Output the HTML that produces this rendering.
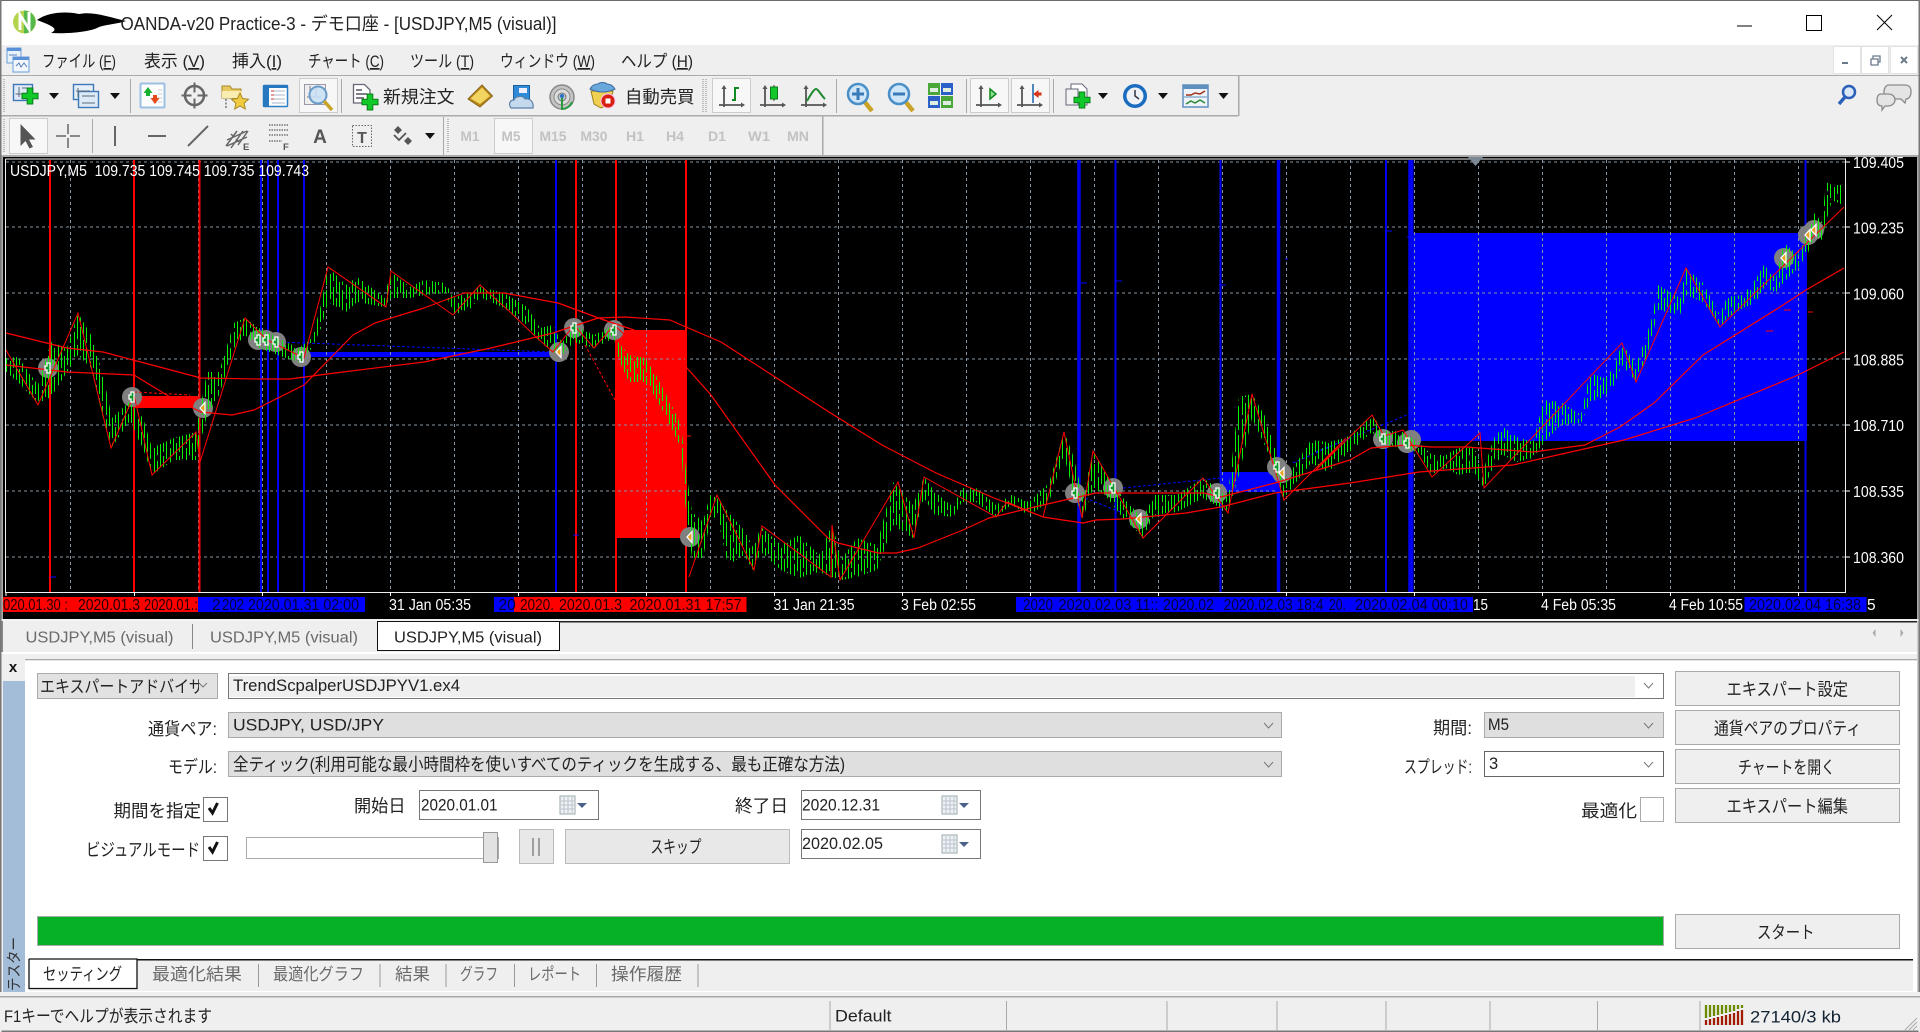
<!DOCTYPE html>
<html lang="ja"><head><meta charset="utf-8"><title>OANDA-v20 Practice-3</title>
<style>
html,body{margin:0;padding:0;width:1920px;height:1032px;overflow:hidden;background:#efefef}
svg{display:block;position:absolute;left:0;top:0}
text{font-family:"Liberation Sans","Noto Sans CJK JP",sans-serif;white-space:pre}
.d{fill:#222}.g{fill:#6a6a6a}.w{fill:#fff}.c{font-size:15.5px}.k{fill:#200}.n{fill:#003}.m{font-size:14px;font-weight:bold;fill:#c2c2c2;text-anchor:middle}
.f{font-size:16px}
</style></head><body>
<svg width="1920" height="1032" viewBox="0 0 1920 1032" xmlns="http://www.w3.org/2000/svg">
<defs>
<pattern id="bars" width="16" height="29" patternUnits="userSpaceOnUse">
<g fill="#06f006" shape-rendering="crispEdges">
<rect x="0" y="0" width="1" height="3"/><rect x="0" y="8" width="1" height="21"/>
<rect x="3" y="0" width="1" height="17"/><rect x="3" y="21" width="1" height="8"/>
<rect x="6" y="0" width="1" height="24"/>
<rect x="10" y="0" width="1" height="9"/><rect x="10" y="13" width="1" height="16"/>
<rect x="13" y="0" width="1" height="20"/><rect x="13" y="26" width="1" height="3"/>
</g></pattern>
<clipPath id="cmb"><rect x="38" y="674" width="161" height="24"/></clipPath>
<clipPath id="ch"><rect x="3" y="157" width="1914" height="462"/></clipPath>
<g id="plus"><path d="M-2.800-8h5.600v5.200h5.200v5.600h-5.200v5.200h-5.600v-5.200h-5.200v-5.600h5.200z" fill="#12c92a" stroke="#0a7d18" stroke-width="1"/></g>
<g id="ax"><path d="M-8-10V10M-13 8H11" stroke="#555" stroke-width="1.800" fill="none"/><path d="M-8-12l-2.500 4h5zM13 8l-4-2.500v5z" fill="#555"/></g>
<g id="mag"><path d="M6 7l8 10" stroke="#c9a227" stroke-width="4.500"/><circle r="10" cy="0" fill="#cfe5f8" stroke="#4a90c8" stroke-width="2.500"/></g>
<g id="cal"><rect width="15" height="18" fill="#eef1f5" stroke="#9aa" stroke-width="1"/><path d="M4 1v16M8 1v16M12 1v16M1 5h13M1 9h13M1 13h13" stroke="#bcc4cc" stroke-width="1"/><path d="M17 7h10l-5 5z" fill="#4a6288"/></g>
<g id="sig"><circle r="10" fill="#808080"/></g>
<g id="gb"><path d="M2-5h-3v3h-2v4h2v3h3z" fill="#0a9a2a" stroke="#fff" stroke-width="1.300"/></g>
<g id="gs"><path d="M-3 0l5-5.500v11z" fill="#e8a020" stroke="#fff" stroke-width="1.300"/></g>
</defs>

<!-- title bar -->
<rect width="1920" height="45" fill="#fff"/>
<rect width="1920" height="1" fill="#6b6b6b"/>
<circle cx="24.500" cy="22" r="11.500" fill="#b4d44e"/>
<path d="M24 10.500a11.500 11.500 0 0 1 0 23z" fill="#55b84a"/>
<path d="M20 30V15l9 14V12" fill="none" stroke="#fff" stroke-width="3"/>
<path d="M37 20c10-8 30-9 42-6 14-3 30 3 47 7-8 3-18 3-27 6-8 5-32 7-48 6 8-4 2-7-14-13z" fill="#000"/>
<text x="120.500" y="30" font-size="18" fill="#222" textLength="436" lengthAdjust="spacingAndGlyphs">OANDA-v20 Practice-3 - デモ口座 - [USDJPY,M5 (visual)]</text>
<path d="M1737 26h15" stroke="#000" stroke-width="1"/>
<rect x="1806.500" y="15.500" width="15" height="15" fill="none" stroke="#000"/>
<path d="M1877 15l15 15M1892 15l-15 15" stroke="#000"/>

<!-- menu -->
<rect y="45" width="1920" height="30" fill="#efefef"/>
<g>
<rect x="7" y="48" width="14" height="15" fill="#e8f0fa" stroke="#6a9cd8"/><rect x="7" y="48" width="14" height="3" fill="#5a90d8"/>
<rect x="13" y="57" width="16" height="15" fill="#f2f7fd" stroke="#6a9cd8"/><rect x="13" y="57" width="16" height="3" fill="#5a90d8"/>
<path d="M16 66l3-3 2 4 3-4 3 4" stroke="#5a80b8" fill="none"/><path d="M9 55h8" stroke="#5a80b8"/>
</g>
<g class="d" font-size="17">
<text x="42" y="67" textLength="74" lengthAdjust="spacingAndGlyphs">ファイル (<tspan text-decoration="underline">F</tspan>)</text>
<text x="144" y="67" textLength="61" lengthAdjust="spacingAndGlyphs">表示 (<tspan text-decoration="underline">V</tspan>)</text>
<text x="232" y="67" textLength="50" lengthAdjust="spacingAndGlyphs">挿入(<tspan text-decoration="underline">I</tspan>)</text>
<text x="308" y="67" textLength="76" lengthAdjust="spacingAndGlyphs">チャート (<tspan text-decoration="underline">C</tspan>)</text>
<text x="410" y="67" textLength="64" lengthAdjust="spacingAndGlyphs">ツール (<tspan text-decoration="underline">T</tspan>)</text>
<text x="500" y="67" textLength="95" lengthAdjust="spacingAndGlyphs">ウィンドウ (<tspan text-decoration="underline">W</tspan>)</text>
<text x="621" y="67" textLength="72" lengthAdjust="spacingAndGlyphs">ヘルプ (<tspan text-decoration="underline">H</tspan>)</text>
</g>
<g fill="#fff" stroke="#e2e2e2"><rect x="1833.500" y="46.500" width="27" height="27"/><rect x="1861.500" y="46.500" width="27" height="27"/><rect x="1890.500" y="46.500" width="27" height="27"/></g>
<path d="M1842 63h6" stroke="#6a7a8a" stroke-width="2"/>
<path d="M1871 59h7v6h-7zM1873 59v-3h7v6h-2" fill="none" stroke="#6a7a8a" stroke-width="1.300"/>
<path d="M1901 57l6 6M1907 57l-6 6" stroke="#6a7a8a" stroke-width="2"/>

<!-- toolbars -->
<rect y="75" width="1920" height="1" fill="#aaa"/>
<rect y="115" width="1238" height="1.500" fill="#aaa"/>
<rect x="1238" y="76" width="1.500" height="40" fill="#aaa"/>
<rect x="822" y="116" width="1.500" height="39" fill="#aaa"/>
<rect y="155" width="1920" height="2" fill="#aaa"/>
<g fill="#aaa"><rect x="130" y="79" width="1" height="34"/><rect x="341" y="79" width="1" height="34"/><rect x="836" y="79" width="1" height="34"/><rect x="966" y="79" width="1" height="34"/><rect x="1053" y="79" width="1" height="34"/><rect x="92" y="119" width="1" height="34"/><rect x="443" y="117" width="1" height="38"/></g>
<path d="M4 79v34M4 119v34M448 119v34M703 79v34M706 79v34" stroke="#aaa" stroke-dasharray="1 1" stroke-width="1.500"/>
<!-- pressed boxes -->
<g fill="#f7f7f7" stroke="#ccc"><rect x="299.500" y="78.500" width="38" height="34"/><rect x="712.500" y="78.500" width="38" height="34"/><rect x="970.500" y="78.500" width="38" height="34"/><rect x="1011.500" y="78.500" width="38" height="34"/><rect x="9.500" y="118.500" width="38" height="35"/><rect x="494.500" y="118.500" width="38" height="35"/></g>

<!-- T1 icons -->
<g><rect x="13.500" y="84.500" width="19" height="16" fill="#dfeaf6" stroke="#3f78b8" stroke-width="1.400"/><path d="M19 87v10M15.500 94H27M22 88h7" stroke="#5a6a7a" fill="none"/><use href="#plus" x="30" y="96"/></g>
<path d="M49 93h10l-5 6z" fill="#111"/>
<g><rect x="73.500" y="84.500" width="20" height="15" fill="#e6eff8" stroke="#3f78b8" stroke-width="1.400"/><rect x="78.500" y="91.500" width="20" height="16" fill="#dce9f6" stroke="#3f78b8" stroke-width="1.400"/><path d="M78 88v9M76 91h14M82 96h13M82 103h13" stroke="#5a6a7a"/></g>
<path d="M110 93h10l-5 6z" fill="#111"/>
<g><rect x="140.500" y="83.500" width="24" height="24" rx="1" fill="#fdfdfd" stroke="#9cc0e4" stroke-width="2"/><path d="M158 90h4M158 94h4M158 98h4M158 102h4" stroke="#ccc"/><path d="M148 87l4.500 6h-2.500v3h-4v-3h-2.500z" fill="#18b030"/><path d="M155 104l-4.500-6h2.500v-3h4v3h2.500z" fill="#e84818"/></g>
<g transform="translate(194.500 95.500)"><circle r="9.500" fill="none" stroke="#666" stroke-width="2.500"/><path d="M0-13V-3M0 3V13M-13 0H-3M3 0H13" stroke="#666" stroke-width="2"/></g>
<g><path d="M222 86h8l2 3h9v9h-19z" fill="#e8c860" stroke="#a88a28"/><rect x="222" y="91" width="20" height="7" fill="#f8ecb0"/><path d="M226 99v9" stroke="#777" stroke-width="1.500" stroke-dasharray="2 1.500"/><path d="M240 93l2.500 5.500 6 .7-4.400 4 1.200 5.800-5.300-3-5.300 3 1.200-5.800-4.400-4 6-.7z" fill="#f2cc40" stroke="#a88a28"/></g>
<g><rect x="263.500" y="85.500" width="24" height="21" rx="1" fill="#fff" stroke="#2f7fc8" stroke-width="1.500"/><rect x="263" y="85" width="6" height="22" fill="#2878c0"/><rect x="263" y="85" width="25" height="3" fill="#2878c0"/><path d="M272 91h13M272 95h13M272 99h13M272 103h13" stroke="#a8b4c8"/><path d="M271 91h3M271 95h3M271 99h3" stroke="#c33"/></g>
<g><rect x="304.500" y="84.500" width="21" height="20" fill="#eee" stroke="#99a"/><path d="M310 86v14M307 97h14M316 88v8" stroke="#778"/><circle cx="318" cy="95" r="8.500" fill="#c8e0f4" fill-opacity=".85" stroke="#6a9cc8" stroke-width="2"/><path d="M324 101l8 9" stroke="#c9a227" stroke-width="3.500"/></g>
<g><path d="M353.500 84.500h11l5.500 5.500v13h-16.500z" fill="#fff" stroke="#667" stroke-width="1.300"/><path d="M356 90h6M356 94h11M356 98h8" stroke="#556" stroke-width="1.500"/><use href="#plus" x="370" y="102"/></g>
<text x="383" y="103" class="d" font-size="17.500" textLength="71.500" lengthAdjust="spacingAndGlyphs">新規注文</text>
<g><path d="M468 99l14-14 10.500 11-12.500 11z" fill="#b8841c" stroke="#8a6a18"/><path d="M470.500 98.500l11.500-11 8 8.500-10 8z" fill="#f2d460"/></g>
<g><path d="M513.500 85.500h16v15h-16z" fill="#2f8ad8" stroke="#1c5f9f"/><rect x="519" y="88" width="8" height="5" fill="#eef"/><path d="M511 108c-3-4-1-8 3-8 1-4 9-5 11-1 5-1 9 3 8 9z" fill="#c4d9ee" stroke="#5a80a8" stroke-width="1.200"/></g>
<g transform="translate(562 97)"><circle r="12" fill="#c4c4c4" stroke="#8a8a8a" stroke-width="1.500"/><circle r="8" fill="#dcdcdc" stroke="#8a8a8a"/><circle r="4" fill="#b8c8d0" stroke="#777"/><path d="M0 1v11c5 0 9-4 10-7" stroke="#2a9a40" stroke-width="2" fill="none"/><circle cy="-1" r="2" fill="#2a70c0"/></g>
<g><path d="M591 91h22l-3 13-9 4-7-4z" fill="#f0d050" stroke="#a08020"/><path d="M590 89c2-4 5-5 8-5 2-2 7-2 9 0 3 0 6 2 8 5-8 4-17 4-25 0z" fill="#6aa8dc" stroke="#3a6a9f"/><circle cx="608" cy="101" r="7" fill="#d82010" stroke="#fbe" stroke-width="1"/><rect x="605.500" y="98.500" width="5" height="5" fill="#fff"/></g>
<text x="625" y="103" class="d" font-size="17.500" textLength="69.500" lengthAdjust="spacingAndGlyphs">自動売買</text>

<g transform="translate(732 97)"><use href="#ax"/><path d="M0 3H3V-9H7" stroke="#108a20" stroke-width="2" fill="none"/></g>
<g transform="translate(773 97)"><use href="#ax"/><path d="M1-12v16" stroke="#333"/><rect x="-2.500" y="-10" width="7" height="12" fill="#14c82c" stroke="#0a7a18"/></g>
<g transform="translate(814 97)"><use href="#ax"/><path d="M-7 4C-3-3 0-8 2-8S7-2 11 2" stroke="#208a30" stroke-width="2" fill="none"/></g>
<g transform="translate(858 94)"><use href="#mag"/><path d="M-6 0H6M0-6V6" stroke="#3a7ab8" stroke-width="3"/></g>
<g transform="translate(899 94)"><use href="#mag"/><path d="M-6 0H6" stroke="#3a7ab8" stroke-width="3"/></g>
<g transform="translate(928 83)"><rect width="12" height="12" fill="#4aa83a"/><rect x="13" width="12" height="12" fill="#2a60c8"/><rect y="13" width="12" height="12" fill="#2a60c8"/><rect x="13" y="13" width="12" height="12" fill="#4aa83a"/><path d="M2 5h8v4H2zM15 5h8v4h-8zM2 18h8v4H2zM15 18h8v4h-8z" fill="#dfeee0"/></g>
<g transform="translate(989 97)"><use href="#ax"/><path d="M1-8l6 5-6 5z" fill="#8fe08f" stroke="#108a20" stroke-width="1.500"/></g>
<g transform="translate(1030 97)"><use href="#ax"/><path d="M3-13V6" stroke="#3a7ab8" stroke-width="1.800"/><path d="M4-3l4-3v2h3v2H8v2z" fill="#e03818" stroke="#d03010"/></g>
<g transform="translate(1065 83)"><path d="M6 1h11l5 5v16H6z" fill="#fff" stroke="#667"/><rect x="1" y="6" width="12" height="16" fill="#f2f2f2" stroke="#667"/><use href="#plus" x="17" y="17"/></g>
<path d="M1098 93h10l-5 6z" fill="#111"/>
<g transform="translate(1135 96)"><circle r="12" fill="#1a6cc0"/><circle r="8.500" fill="#eef2f6"/><path d="M0-6V0L4 3" stroke="#334" stroke-width="1.500" fill="none"/></g>
<path d="M1158 93h10l-5 6z" fill="#111"/>
<g transform="translate(1183 85)"><rect width="25" height="22" fill="#eef3f9" stroke="#5f8fbf" stroke-width="1.500"/><rect width="25" height="4" fill="#5f8fbf"/><path d="M3 10l5 0 4-2 5 1 5-3" stroke="#a03018" stroke-width="1.500" fill="none"/><path d="M1 12h23" stroke="#5f8fbf"/><path d="M3 19l5-3 4 2 5-3 5 3" stroke="#2a8a30" stroke-width="1.500" fill="none"/></g>
<path d="M1218.500 93h10l-5 6z" fill="#111"/>
<circle cx="1849" cy="92" r="6" fill="#dbe8f8" stroke="#2a60b8" stroke-width="2.500"/><path d="M1845 97l-6 7" stroke="#2a60b8" stroke-width="3.500"/>
<g fill="#e4e4e4" stroke="#8a8a8a" stroke-width="1.300"><path d="M1889 85h15c6 0 7 3 7 7s-2 7-5 7l-1 4-4-4h-11c-4 0-6-3-6-7s2-7 5-7z"/><path d="M1881 94h7c5 0 7 3 7 6s-3 6-7 6h-3l-3 4v-4c-4 0-5-3-5-6s1-6 4-6z"/></g>

<!-- T2 icons -->
<path d="M20.500 124v22l5-5 4 7.500 3.500-1.500-4-7.500h6.500z" fill="#555"/>
<path d="M68 124v10M68 138v10M56 136h10M70 136h10" stroke="#666" stroke-width="1.500"/>
<path d="M115 126v20M148 136h18M188 146l20-20" stroke="#666" stroke-width="2"/>
<g stroke="#666" stroke-width="1.500" fill="none"><path d="M226 146l11-15M231 148l12-17M238 145l10-14M227 140l20-9M227 146l20-9M231 134l3 3M236 139l3 3"/></g>
<text x="243" y="150" font-size="9.500" font-weight="bold" fill="#555">E</text>
<path d="M269 125h20M269 130h20M269 135h20M269 141h13" stroke="#777" stroke-dasharray="1.500 1" stroke-width="1.500"/>
<text x="283" y="150" font-size="9.500" font-weight="bold" fill="#555">F</text>
<text x="320" y="143" font-size="19" font-weight="bold" fill="#555" text-anchor="middle">A</text>
<rect x="352.500" y="125.500" width="19" height="21" fill="none" stroke="#666" stroke-dasharray="1.500 1.500"/>
<text x="362" y="143" font-size="16" font-weight="bold" fill="#555" text-anchor="middle">T</text>
<path d="M398 126l4 4-4 4-4-4zM408 137l4 4-4 4-4-4z" fill="#555"/><path d="M394 135l5 5 7-7" stroke="#555" stroke-width="1.800" fill="none"/>
<path d="M425 133h10l-5 6z" fill="#111"/>
<text class="m" x="470" y="141" textLength="19" lengthAdjust="spacingAndGlyphs">M1</text>
<text class="m" x="511" y="141" textLength="19" lengthAdjust="spacingAndGlyphs">M5</text>
<text class="m" x="553" y="141" textLength="27" lengthAdjust="spacingAndGlyphs">M15</text>
<text class="m" x="594" y="141" textLength="27" lengthAdjust="spacingAndGlyphs">M30</text>
<text class="m" x="635" y="141" textLength="18" lengthAdjust="spacingAndGlyphs">H1</text>
<text class="m" x="675" y="141" textLength="18" lengthAdjust="spacingAndGlyphs">H4</text>
<text class="m" x="717" y="141" textLength="18" lengthAdjust="spacingAndGlyphs">D1</text>
<text class="m" x="759" y="141" textLength="22" lengthAdjust="spacingAndGlyphs">W1</text>
<text class="m" x="798" y="141" textLength="22" lengthAdjust="spacingAndGlyphs">MN</text>

<!-- chart -->
<rect x="0" y="157" width="1920" height="463" fill="#a8a8a8"/>
<rect x="3" y="157" width="1914" height="462" fill="#000"/>
<g clip-path="url(#ch)">
<rect x="134" y="396" width="66" height="12" fill="#f00"/>
<rect x="615" y="330" width="72" height="208" fill="#f00"/>
<rect x="310" y="352" width="243" height="5" fill="#00f"/>
<rect x="1412" y="233" width="395" height="208" fill="#00f"/>
<rect x="1221" y="472" width="58" height="20" fill="#00f"/>
<path d="M6 162H1845M6 227H1845M6 293H1845M6 359H1845M6 425H1845M6 491H1845M6 557H1845M70.500 160V592M134.500 160V592M198.500 160V592M262.500 160V592M326.500 160V592M390.500 160V592M454.500 160V592M518.500 160V592M582.500 160V592M646.500 160V592M710.500 160V592M774.500 160V592M838.500 160V592M902.500 160V592M966.500 160V592M1030.500 160V592M1094.500 160V592M1158.500 160V592M1222.500 160V592M1286.500 160V592M1350.500 160V592M1414.500 160V592M1478.500 160V592M1542.500 160V592M1606.500 160V592M1670.500 160V592M1734.500 160V592M1798.500 160V592" stroke="#8494a4" stroke-width="1" stroke-dasharray="3 3" fill="none"/>
<path d="M50 160V592M134 160V592M199.500 160V592M576 160V592M616 160V592M686 160V592" stroke="#f00" stroke-width="2" fill="none"/>
<path d="M261 160V592M268 160V592M278 160V592M304 160V592M556 160V592M1115.500 160V592M1220.500 160V592M1386 160V592M1805.500 160V592" stroke="#0000f0" stroke-width="2" fill="none"/>
<path d="M1079 160V592M1278.500 160V592M1410 160V592" stroke="#0000f0" stroke-width="3.500" fill="none"/>
<path d="M1412.500 160V592" stroke="#0000f0" stroke-width="2"/>
<path d="M277 342L553 352M1085 498L1123 513M1123 488L1221 478M1293 463L1350 438M1316 452L1407 415" stroke="#00f" stroke-width="1" stroke-dasharray="3 2" fill="none"/>
<g><use href="#sig" x="48" y="368"/><use href="#sig" x="132" y="397"/><use href="#sig" x="203" y="408"/><use href="#sig" x="258" y="340"/><use href="#sig" x="266" y="340"/><use href="#sig" x="276" y="342"/><use href="#sig" x="301" y="357"/><use href="#sig" x="559" y="352"/><use href="#sig" x="574" y="328"/><use href="#sig" x="614" y="330"/><use href="#sig" x="690" y="537"/><use href="#sig" x="1075" y="493"/><use href="#sig" x="1113" y="488"/><use href="#sig" x="1139" y="519"/><use href="#sig" x="1217" y="493"/><use href="#sig" x="1277" y="467"/><use href="#sig" x="1282" y="473"/><use href="#sig" x="1383" y="439"/><use href="#sig" x="1407" y="443"/><use href="#sig" x="1411" y="440"/><use href="#sig" x="1784" y="258"/><use href="#sig" x="1808" y="235"/><use href="#sig" x="1814" y="230"/></g>
<polygon fill="url(#bars)" points="6,358 18,357 38,385 51,342 67,348 78,313 91,335 103,375 112,418 129,402 143,418 152,448 174,438 196,432 207,372 219,372 234,323 245,318 259,328 286,342 299,348 312,338 321,305 328,267 346,285 357,277 384,297 391,272 410,287 424,280 446,283 453,298 471,292 480,287 504,293 527,307 540,328 553,325 562,343 574,325 594,335 614,325 618,342 629,355 645,358 656,375 670,402 681,425 685,462 692,512 703,522 710,495 717,498 728,512 744,530 753,547 761,527 781,545 799,535 819,555 832,525 842,558 857,538 877,545 893,482 913,505 924,477 935,492 953,507 962,488 976,488 996,505 1011,495 1029,502 1049,483 1064,432 1072,452 1083,495 1093,452 1105,472 1123,498 1143,518 1154,495 1177,495 1203,478 1228,495 1239,397 1252,394 1266,418 1275,448 1284,482 1311,440 1328,442 1346,438 1372,415 1383,430 1403,432 1418,442 1432,455 1446,455 1458,448 1474,448 1484,468 1494,438 1503,427 1517,437 1533,442 1544,400 1561,402 1581,415 1590,373 1604,378 1614,368 1622,343 1636,365 1646,337 1652,318 1658,285 1680,298 1686,268 1703,283 1720,315 1727,297 1743,295 1755,280 1764,265 1776,278 1784,243 1798,255 1808,232 1814,213 1822,222 1826,182 1832,185 1843,185 1843,205 1832,200 1826,222 1822,240 1814,235 1808,253 1798,268 1784,282 1776,292 1764,288 1755,303 1743,308 1727,318 1720,327 1703,302 1686,295 1680,315 1658,310 1652,338 1646,358 1636,382 1622,365 1614,385 1604,397 1590,402 1581,423 1561,425 1544,442 1533,458 1517,462 1503,455 1494,465 1484,488 1474,472 1458,475 1446,468 1432,475 1418,452 1403,448 1383,445 1372,432 1346,455 1328,472 1311,463 1284,498 1275,472 1266,448 1252,418 1239,475 1228,512 1203,498 1177,512 1154,515 1143,537 1123,518 1105,495 1093,488 1083,518 1072,488 1064,455 1049,502 1029,515 1011,505 996,517 976,502 962,502 953,517 935,515 924,498 913,538 893,525 877,570 857,577 842,580 832,577 819,572 799,578 781,570 761,552 753,570 744,555 728,565 717,515 710,522 703,558 692,558 685,502 681,448 670,425 656,398 645,382 629,382 618,358 614,338 594,348 574,342 562,355 553,352 540,342 527,325 504,308 480,297 471,308 453,315 446,293 424,295 410,298 391,298 384,307 357,302 346,312 328,302 321,328 312,348 299,362 286,358 259,348 245,335 234,348 219,395 207,415 196,460 174,460 152,475 143,448 129,422 112,447 103,418 91,368 78,355 67,372 51,397 38,403 18,382 6,372"/>
<g fill="none" stroke="#f00" stroke-width="1.200" stroke-linejoin="round">
<polyline points="6,333 67,348 103,352 152,365 201,378 259,379 290,379 335,373 424,362 491,348 553,333 598,318 625,317 670,320 686,327 721,342 775,377 829,412 882,445 936,473 994,498 1043,517 1083,523 1096,520 1123,519 1186,513 1221,507 1275,493 1350,483 1419,472 1513,465 1624,440 1695,418 1798,375 1844,352"/>
<polyline points="6,365 67,372 134,375 170,397 201,412 232,415 254,410 304,385 353,335 375,323 424,308 464,293 504,293 558,303 604,320 634,330 687,368 711,395 775,485 828,538 838,543 878,553 896,553 918,548 963,530 989,518 1043,505 1065,500 1096,493 1159,493 1204,493 1221,497 1275,483 1350,460 1371,448 1407,445 1431,447 1466,447 1533,452 1585,445 1620,427 1654,403 1703,355 1780,307 1806,290 1844,268"/>
</g>
<polyline fill="none" stroke="#f00" stroke-width="1" points="6,350 38,405 78,313 111,448 134,395 152,475 196,432 200,462 245,318 267,340 304,358 328,267 386,307 391,271 453,315 480,285 510,312 536,337 553,352 574,325 594,348 614,325 636,345"/>
<polyline fill="none" stroke="#f00" stroke-width="1" points="689,577 717,495 754,570 762,526 831,577 832,525 840,580 898,482 914,538 924,477 996,517 1007,502 1043,517 1064,432 1082,518 1093,451 1143,538 1203,478 1228,513 1252,394 1284,500 1346,438 1316,470 1372,415 1384,436 1403,430 1432,477 1480,433 1484,488 1622,343 1636,382 1686,268 1720,327 1844,207"/>
<path d="M585 345L615 400M134 392L190 395" fill="none" stroke="#f00" stroke-width="1" stroke-dasharray="3 2"/>
<path d="M1766 331h7M1784 310h7M1808 312h5M686 436h5M574 535h5" stroke="#f00" fill="none"/>
<path d="M50 577h6M573 535h6M1079 283h8M1115 281h7M1219 285h7M1285 259h3M1386 231h6M1407 237h6" stroke="#00f" fill="none"/>
<g><use href="#gb" x="48" y="368"/><use href="#gb" x="132" y="397"/><use href="#gb" x="258" y="340"/><use href="#gb" x="266" y="340"/><use href="#gb" x="276" y="342"/><use href="#gb" x="301" y="357"/><use href="#gb" x="574" y="328"/><use href="#gb" x="614" y="330"/><use href="#gb" x="1075" y="493"/><use href="#gb" x="1113" y="488"/><use href="#gb" x="1217" y="493"/><use href="#gb" x="1277" y="467"/><use href="#gb" x="1383" y="439"/><use href="#gb" x="1407" y="443"/><use href="#gs" x="203" y="408"/><use href="#gs" x="559" y="352"/><use href="#gs" x="690" y="537"/><use href="#gs" x="1139" y="519"/><use href="#gs" x="1282" y="473"/><use href="#gs" x="1784" y="258"/><use href="#gs" x="1808" y="235"/><use href="#gs" x="1814" y="230"/></g>
<!-- axes -->
<path d="M5.500 159V592.500H1845.500V159H5.500" fill="none" stroke="#eee" stroke-width="1"/>
<path d="M1845 162h5M1845 227h5M1845 293h5M1845 359h5M1845 425h5M1845 491h5M1845 557h5M6 592v4M134.500 592v4M262.500 592v4M390.500 592v4M518.500 592v4M646.500 592v4M774.500 592v4M902.500 592v4M1030.500 592v4M1158.500 592v4M1286.500 592v4M1414.500 592v4M1542.500 592v4M1670.500 592v4M1798.500 592v4" stroke="#fff" fill="none"/>
<path d="M1468 157h15l-7.500 9z" fill="#7c8894"/>
<text class="w" x="10" y="176" font-size="15.500" textLength="299" lengthAdjust="spacingAndGlyphs">USDJPY,M5  109.735 109.745 109.735 109.743</text>
<g class="w c">
<text x="1853" y="168" textLength="51" lengthAdjust="spacingAndGlyphs">109.405</text>
<text x="1853" y="233.500" textLength="51" lengthAdjust="spacingAndGlyphs">109.235</text>
<text x="1853" y="299.500" textLength="51" lengthAdjust="spacingAndGlyphs">109.060</text>
<text x="1853" y="365.500" textLength="51" lengthAdjust="spacingAndGlyphs">108.885</text>
<text x="1853" y="431" textLength="51" lengthAdjust="spacingAndGlyphs">108.710</text>
<text x="1853" y="497" textLength="51" lengthAdjust="spacingAndGlyphs">108.535</text>
<text x="1853" y="563" textLength="51" lengthAdjust="spacingAndGlyphs">108.360</text>
</g>
<!-- time axis -->
<rect x="3" y="597" width="195" height="15" fill="#f00"/><rect x="198" y="597" width="167" height="15" fill="#00f"/>
<rect x="494" y="597" width="20" height="15" fill="#00f"/><rect x="514" y="597" width="232.500" height="15" fill="#f00"/>
<rect x="1016" y="597" width="457" height="15" fill="#00f"/><rect x="1744.500" y="597" width="122" height="15" fill="#00f"/>
<g class="c">
<text class="k" x="3" y="610" textLength="65" lengthAdjust="spacingAndGlyphs">020.01.30 :</text>
<text class="k" x="78" y="610" textLength="62" lengthAdjust="spacingAndGlyphs">2020.01.3</text>
<text class="k" x="144" y="610" textLength="54" lengthAdjust="spacingAndGlyphs">2020.01.:</text>
<text class="n" x="212" y="610">2</text>
<text class="n" x="222" y="610" textLength="22" lengthAdjust="spacingAndGlyphs">202</text>
<text class="n" x="248" y="610" textLength="111" lengthAdjust="spacingAndGlyphs">2020.01.31 02:00</text>
<text class="w" x="389" y="610" textLength="82" lengthAdjust="spacingAndGlyphs">31 Jan 05:35</text>
<text class="n" x="498.500" y="610">20</text>
<text class="k" x="520" y="610" textLength="34" lengthAdjust="spacingAndGlyphs">2020.</text>
<text class="k" x="559" y="610" textLength="63" lengthAdjust="spacingAndGlyphs">2020.01.3</text>
<text class="k" x="629.500" y="610" textLength="112" lengthAdjust="spacingAndGlyphs">2020.01.31 17:57</text>
<text class="w" x="773.500" y="610" textLength="81" lengthAdjust="spacingAndGlyphs">31 Jan 21:35</text>
<text class="w" x="901" y="610" textLength="75" lengthAdjust="spacingAndGlyphs">3 Feb 02:55</text>
<text class="n" x="1023" y="610" textLength="30" lengthAdjust="spacingAndGlyphs">2020</text>
<text class="n" x="1058.500" y="610" textLength="100" lengthAdjust="spacingAndGlyphs">2020.02.03 11::</text>
<text class="n" x="1163" y="610" textLength="51" lengthAdjust="spacingAndGlyphs">2020.02</text>
<text class="n" x="1223.500" y="610" textLength="100" lengthAdjust="spacingAndGlyphs">2020.02.03 18:4</text>
<text class="n" x="1329" y="610" textLength="17" lengthAdjust="spacingAndGlyphs">20.</text>
<text class="n" x="1355" y="610" textLength="113" lengthAdjust="spacingAndGlyphs">2020.02.04 00:10</text>
<text class="w" x="1473" y="610" textLength="15" lengthAdjust="spacingAndGlyphs">15</text>
<text class="w" x="1541" y="610" textLength="75" lengthAdjust="spacingAndGlyphs">4 Feb 05:35</text>
<text class="w" x="1669" y="610" textLength="74" lengthAdjust="spacingAndGlyphs">4 Feb 10:55</text>
<text class="n" x="1749" y="610" textLength="112" lengthAdjust="spacingAndGlyphs">2020.02.04 16:38</text>
<text class="w" x="1867" y="610">5</text>
</g>
</g>

<!-- upper tabs -->
<rect y="619" width="1920" height="2" fill="#f2f2f2"/>
<rect y="621" width="1920" height="31" fill="#efefef"/>
<rect x="560" y="621" width="1360" height="1.500" fill="#222"/>
<rect x="0" y="621" width="3" height="31" fill="#888"/>
<rect x="377.500" y="621.500" width="182" height="29" fill="#fff" stroke="#111"/>
<rect x="192" y="624" width="1" height="25" fill="#888"/>
<g class="f">
<text class="g" x="25.500" y="642.500" textLength="148" lengthAdjust="spacingAndGlyphs">USDJPY,M5 (visual)</text>
<text class="g" x="210" y="642.500" textLength="148" lengthAdjust="spacingAndGlyphs">USDJPY,M5 (visual)</text>
<text class="d" x="394" y="642.500" textLength="148" lengthAdjust="spacingAndGlyphs">USDJPY,M5 (visual)</text>
</g>
<path d="M1875.500 629v8l-3-4zM1900.500 629v8l3-4z" fill="#aaa"/>
<rect y="652" width="1920" height="2" fill="#fff"/>

<!-- tester panel -->
<rect x="25" y="659" width="1892" height="333" fill="#fff"/>
<rect x="25" y="659" width="1892" height="1.300" fill="#aaa"/>
<rect x="3" y="681" width="22" height="311" fill="#a3bcd8"/>
<text x="13" y="672" font-size="15" font-weight="bold" fill="#111" text-anchor="middle">x</text>
<text transform="translate(19 991) rotate(-90)" font-size="15" fill="#333" textLength="54" lengthAdjust="spacingAndGlyphs">テスター</text>
<rect x="1917" y="621" width="3" height="375" fill="#cfcfcf"/>
<rect x="1918.500" y="0" width="1.500" height="1032" fill="#777"/>
<rect x="0" y="0" width="1.500" height="1032" fill="#777"/>

<!-- combos -->
<rect x="37.500" y="673.500" width="180" height="25" fill="#e2e2e2" stroke="#aaa"/>
<text clip-path="url(#cmb)" class="d" x="40" y="692.500" font-size="17" textLength="164" lengthAdjust="spacingAndGlyphs">エキスパートアドバイザ</text>
<rect x="228.500" y="673.500" width="1435" height="25" fill="#fff" stroke="#777"/>
<rect x="229" y="676" width="1406" height="21" fill="#efefef"/>
<text class="d" x="233" y="691" font-size="16.500" textLength="227" lengthAdjust="spacingAndGlyphs">TrendScpalperUSDJPYV1.ex4</text>
<rect x="228.500" y="712.500" width="1053" height="25" fill="#dfdfdf" stroke="#aaa"/>
<text class="d" x="233" y="730.500" font-size="16.500" textLength="151" lengthAdjust="spacingAndGlyphs">USDJPY, USD/JPY</text>
<rect x="228.500" y="751.500" width="1053" height="25" fill="#dfdfdf" stroke="#aaa"/>
<text class="d" x="233" y="770.500" font-size="17.500" textLength="612" lengthAdjust="spacingAndGlyphs">全ティック(利用可能な最小時間枠を使いすべてのティックを生成する、最も正確な方法)</text>
<rect x="1484.500" y="712.500" width="179" height="25" fill="#dfdfdf" stroke="#aaa"/>
<text class="d" x="1488" y="730" font-size="16.500" textLength="21" lengthAdjust="spacingAndGlyphs">M5</text>
<rect x="1484.500" y="751.500" width="179" height="25" fill="#fff" stroke="#666"/>
<text class="d" x="1489" y="769" font-size="16.500">3</text>
<path d="M199 683l4 4 4-4M1644 683l4.500 5 4.500-5M1264 723l4.500 5 4.500-5M1264 762l4.500 5 4.500-5M1644 723l4.500 5 4.500-5M1644 762l4.500 5 4.500-5" fill="none" stroke="#777"/>
<!-- labels -->
<g class="d" font-size="17.500">
<text x="148" y="735" textLength="69" lengthAdjust="spacingAndGlyphs">通貨ペア:</text>
<text x="168" y="773" textLength="49" lengthAdjust="spacingAndGlyphs">モデル:</text>
<text x="113.500" y="817" textLength="87.500" lengthAdjust="spacingAndGlyphs">期間を指定</text>
<text x="86" y="856" textLength="114" lengthAdjust="spacingAndGlyphs">ビジュアルモード</text>
<text x="354" y="812" textLength="51.500" lengthAdjust="spacingAndGlyphs">開始日</text>
<text x="735" y="812" textLength="53" lengthAdjust="spacingAndGlyphs">終了日</text>
<text x="1433" y="734" textLength="39" lengthAdjust="spacingAndGlyphs">期間:</text>
<text x="1404" y="773" textLength="68" lengthAdjust="spacingAndGlyphs">スプレッド:</text>
<text x="1581" y="817" textLength="56" lengthAdjust="spacingAndGlyphs">最適化</text>
</g>
<!-- checkboxes -->
<g fill="#fff" stroke="#777"><rect x="203.500" y="797.500" width="24" height="24"/><rect x="203.500" y="836.500" width="24" height="24"/></g>
<rect x="1640.500" y="797.500" width="23" height="24" fill="#fff" stroke="#aaa"/>
<path d="M209 808l3.500 5 5-10M209 847l3.500 5 5-10" fill="none" stroke="#111" stroke-width="3"/>
<!-- date fields -->
<rect x="419.500" y="790.500" width="179" height="29" fill="#fff" stroke="#777"/>
<rect x="801.500" y="790.500" width="179" height="29" fill="#fff" stroke="#777"/>
<rect x="801.500" y="829.500" width="179" height="29" fill="#fff" stroke="#777"/>
<use href="#cal" x="560" y="796"/><use href="#cal" x="942" y="796"/><use href="#cal" x="942" y="835"/>
<g class="d" font-size="16.500">
<text x="421" y="810.500" textLength="76.500" lengthAdjust="spacingAndGlyphs">2020.01.01</text>
<text x="802" y="810.500" textLength="78" lengthAdjust="spacingAndGlyphs">2020.12.31</text>
<text x="802" y="849" textLength="81" lengthAdjust="spacingAndGlyphs">2020.02.05</text>
</g>
<!-- slider, pause, skip -->
<rect x="246.500" y="837.500" width="252" height="21" fill="#fff" stroke="#aaa"/>
<rect x="483.500" y="832.500" width="14" height="30" fill="#e2e2e2" stroke="#999"/>
<rect x="519.500" y="829.500" width="34" height="34" fill="#e8e8e8" stroke="#bbb"/>
<path d="M533 838v18M539 838v18" stroke="#555"/>
<rect x="565.500" y="829.500" width="224" height="34" fill="#e8e8e8" stroke="#bbb"/>
<text class="d" x="650.500" y="853" font-size="17.500" textLength="51" lengthAdjust="spacingAndGlyphs">スキップ</text>
<!-- right buttons -->
<g fill="#efefef" stroke="#aaa"><rect x="1675.500" y="671.500" width="224" height="34"/><rect x="1675.500" y="710.500" width="224" height="34"/><rect x="1675.500" y="749.500" width="224" height="34"/><rect x="1675.500" y="788.500" width="224" height="34"/><rect x="1675.500" y="914.500" width="224" height="34"/></g>
<g class="d" font-size="17.500">
<text x="1726.500" y="695.500" textLength="121.500" lengthAdjust="spacingAndGlyphs">エキスパート設定</text>
<text x="1714" y="734.500" textLength="147" lengthAdjust="spacingAndGlyphs">通貨ペアのプロパティ</text>
<text x="1738" y="773.500" textLength="97" lengthAdjust="spacingAndGlyphs">チャートを開く</text>
<text x="1726.500" y="812.500" textLength="121.500" lengthAdjust="spacingAndGlyphs">エキスパート編集</text>
<text x="1757" y="938.500" textLength="57.500" lengthAdjust="spacingAndGlyphs">スタート</text>
</g>
<!-- progress -->
<rect x="37.500" y="916.500" width="1626" height="29" fill="#06b126" stroke="#aaa"/>
<!-- bottom tabs -->
<rect x="29" y="960" width="1884" height="31" fill="#efefef"/>
<rect x="137" y="959" width="1776" height="1.500" fill="#111"/>
<rect x="29" y="958.500" width="108" height="30" fill="#fff"/>
<path d="M29 959H137V988.500H29V959" fill="none" stroke="#111" stroke-width="1.300"/>
<g fill="#999"><rect x="258" y="964" width="1" height="23"/><rect x="379.500" y="964" width="1" height="23"/><rect x="445.500" y="964" width="1" height="23"/><rect x="514" y="964" width="1" height="23"/><rect x="596" y="964" width="1" height="23"/><rect x="697.500" y="964" width="1" height="23"/></g>
<g font-size="17">
<text class="d" x="43" y="980" textLength="79" lengthAdjust="spacingAndGlyphs">セッティング</text>
<text class="g" x="152" y="980" textLength="90" lengthAdjust="spacingAndGlyphs">最適化結果</text>
<text class="g" x="273" y="980" textLength="91" lengthAdjust="spacingAndGlyphs">最適化グラフ</text>
<text class="g" x="395" y="980" textLength="35" lengthAdjust="spacingAndGlyphs">結果</text>
<text class="g" x="460" y="980" textLength="38" lengthAdjust="spacingAndGlyphs">グラフ</text>
<text class="g" x="528" y="980" textLength="53" lengthAdjust="spacingAndGlyphs">レポート</text>
<text class="g" x="611" y="980" textLength="71" lengthAdjust="spacingAndGlyphs">操作履歴</text>
</g>
<!-- status bar -->
<rect y="992" width="1920" height="40" fill="#efefef"/>
<rect y="996" width="1920" height="1.500" fill="#aaa"/>
<rect x="1.500" y="1030.500" width="1917" height="1.500" fill="#777"/>
<g fill="#aaa"><rect x="829.500" y="1001" width="1" height="29"/><rect x="1006" y="1001" width="1" height="29"/><rect x="1166.500" y="1001" width="1" height="29"/><rect x="1276.500" y="1001" width="1" height="29"/><rect x="1385.500" y="1001" width="1" height="29"/><rect x="1489.500" y="1001" width="1" height="29"/><rect x="1597" y="1001" width="1" height="29"/><rect x="1699.500" y="1001" width="1" height="29"/></g>
<text class="d" x="4" y="1022" font-size="17" textLength="208" lengthAdjust="spacingAndGlyphs">F1キーでヘルプが表示されます</text>
<text class="d" x="835" y="1021.500" font-size="16.500" textLength="56.500" lengthAdjust="spacingAndGlyphs">Default</text>
<path d="M1706 1005v13M1710 1005v12M1714 1005v11M1718 1005v10M1722 1005v9M1726 1005v8M1730 1005v7M1734 1005v6M1738 1005v4M1742 1005v3" stroke="#6b8a00" stroke-width="2.300"/>
<path d="M1706 1025v-5M1710 1025v-6M1714 1025v-7M1718 1025v-8M1722 1025v-9M1726 1025v-10M1730 1025v-11M1734 1025v-12M1738 1025v-14M1742 1025v-15" stroke="#a01c00" stroke-width="2.300"/>
<text x="1750" y="1022.500" font-size="16.500" fill="#123" textLength="91" lengthAdjust="spacingAndGlyphs">27140/3 kb</text>
<path d="M1905 1030l12-12M1909 1030l8-8M1913 1030l4-4" stroke="#aaa"/>
</svg>
</body></html>
